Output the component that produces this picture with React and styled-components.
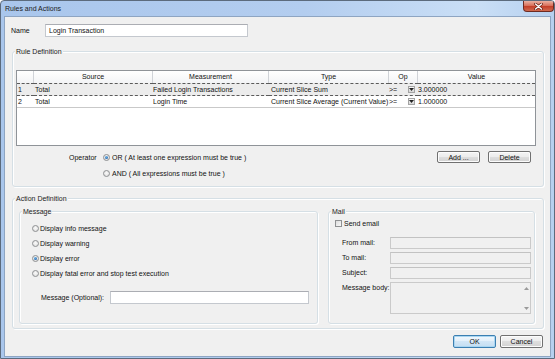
import React from "react";
import styled, { createGlobalStyle } from "styled-components";

const Global = createGlobalStyle`
  html, body { margin: 0; padding: 0; background: #ffffff; }
  body {
    font-family: "Liberation Sans", Arial, sans-serif;
    font-size: 7px;
    color: #000;
  }
  * { box-sizing: border-box; }
`;

const Window = styled.div`
  width: 555px;
  height: 359px;
  border: 1px solid #5c6b7d;
  border-radius: 4px 4px 0 0;
  background: linear-gradient(90deg, #a9c6ec 0%, #b3cdef 55%, #cadff6 86%, #b6d0ef 100%);
  display: flex;
  flex-direction: column;
  overflow: hidden;
`;

const TitleBar = styled.div`
  height: 15px;
  flex: none;
  display: flex;
  align-items: flex-start;
  padding-left: 4px;
`;

const TitleText = styled.span`
  line-height: 15px;
  color: #1b1b1b;
`;

const CloseButton = styled.div`
  margin-left: auto;
  width: 31px;
  height: 11px;
  border: 1px solid #6e2a21;
  border-top: none;
  border-radius: 0 0 4px 4px;
  background: linear-gradient(#eab1a2 0%, #d9725d 45%, #c4402a 55%, #d06a4f 100%);
  display: flex;
  align-items: center;
  justify-content: center;
`;

const Client = styled.div`
  flex: 1;
  margin: 0 3px 1px;
  border: 1px solid #8ea5c2;
  background: #f0f0f0;
  display: flex;
  flex-direction: column;
  padding: 0 6px 0 7px;
`;

const NameRow = styled.div`
  display: flex;
  align-items: center;
  height: 13px;
  margin-top: 7px;
  margin-left: -1px;
`;

const FieldLabel = styled.span`
  width: ${(p) => p.$w}px;
  flex: none;
  line-height: 9px;
  color: #111;
`;

const TextBox = styled.div`
  width: ${(p) => p.$w}px;
  height: ${(p) => p.$h || 13}px;
  flex: none;
  border: 1px solid ${(p) => (p.$disabled ? "#cacaca" : "#c4c8ce")};
  border-top-color: ${(p) => (p.$disabled ? "#c2c2c2" : "#abadb3")};
  background: ${(p) => (p.$disabled ? "#f0f0f0" : "#ffffff")};
  padding-left: 3px;
  display: flex;
  align-items: center;
  color: #111;
`;

const Group = styled.div`
  position: relative;
  flex: none;
  margin-top: ${(p) => p.$mt || 0}px;
  width: ${(p) => (p.$w ? `${p.$w}px` : "auto")};
  height: ${(p) => p.$h}px;
  border: 1px solid #d5dfe5;
  border-radius: 3px;
  box-shadow: inset 1px 1px 0 #ffffff, 1px 1px 0 #ffffff;
  padding: ${(p) => p.$pad};
`;

const GroupTitle = styled.span`
  position: absolute;
  top: -5px;
  left: 2px;
  padding: 0 1px;
  line-height: 9px;
  background: #f0f0f0;
  color: #1c1c1c;
`;

const TableFrame = styled.div`
  height: 76px;
  border: 1px solid #8f9398;
  background: #ffffff;
`;

const Grid = styled.table`
  width: 518px;
  table-layout: fixed;
  border-collapse: separate;
  border-spacing: 0;
  font-size: 7px;
`;

const HeadCell = styled.th`
  height: 12px;
  padding: 0;
  font-weight: normal;
  text-align: center;
  line-height: 12px;
  border-right: ${(p) => (p.$last ? "none" : "1px solid #d0d3d8")};
  background: linear-gradient(#ffffff, #f3f4f6);
  color: #111;
`;

const Row = styled.tr`
  background: ${(p) => (p.$focused ? "#ececec" : "#ffffff")};
`;

const Cell = styled.td`
  height: 11px;
  padding: 0 0 0 ${(p) => p.$pl ?? 1}px;
  line-height: 11px;
  white-space: nowrap;
  overflow: hidden;
  color: #111;
  border-top: ${(p) => (p.$focused ? "1px dashed #5a5a5a" : "none")};
  border-bottom: ${(p) => (p.$focused ? "1px dashed #5a5a5a" : "1px solid #c9c9c9")};
`;

const OpInner = styled.div`
  display: flex;
  align-items: center;
  justify-content: space-between;
  padding-right: 3px;
`;

const DropButton = styled.span`
  width: 7px;
  height: 7px;
  border: 1px solid #a3a3a3;
  background: linear-gradient(#fafafa, #d6d6d6);
  display: flex;
  align-items: center;
  justify-content: center;
`;

const OperatorArea = styled.div`
  margin-top: 5px;
  display: flex;
  align-items: flex-start;
`;

const OperatorGrid = styled.div`
  display: grid;
  grid-template-columns: 34px auto;
  grid-auto-rows: 12px;
  row-gap: 4px;
  padding-left: 53px;
  align-items: center;
`;

const ChoiceLabel = styled.label`
  display: flex;
  align-items: center;
  gap: ${(p) => p.$gap ?? 2}px;
  height: ${(p) => p.$h || 12}px;
  color: #111;
  line-height: 9px;
`;

const RadioDot = styled.span`
  width: 7px;
  height: 7px;
  flex: none;
  border-radius: 50%;
  border: 1px solid #8e9092;
  background: radial-gradient(circle at 50% 40%, #fbfbfb, #d9d9d9);
  display: inline-flex;
  align-items: center;
  justify-content: center;
  &::after {
    content: "";
    width: 3px;
    height: 3px;
    border-radius: 50%;
    background: ${(p) => (p.$checked ? "radial-gradient(circle at 40% 35%, #6ab7ec, #174f98)" : "transparent")};
  }
`;

const CheckBox = styled.span`
  width: 7px;
  height: 7px;
  flex: none;
  border: 1px solid #8e9092;
  background: linear-gradient(135deg, #dcdcdc, #f8f8f8);
`;

const ButtonGroup = styled.div`
  margin-left: auto;
  margin-right: 5px;
  display: flex;
  gap: ${(p) => p.$gap}px;
`;

const Button = styled.div`
  width: 43px;
  height: ${(p) => p.$h || 12}px;
  border: 1px solid ${(p) => (p.$default ? "#3c7fb1" : "#707070")};
  border-radius: 2px;
  background: ${(p) =>
    p.$default
      ? "linear-gradient(#f1f8fd 0%, #e2effa 50%, #d2e6f6 50%, #c4def2 100%)"
      : "linear-gradient(#f4f4f4 0%, #ececec 50%, #dedede 50%, #d2d2d2 100%)"};
  box-shadow: inset 0 0 0 1px ${(p) => (p.$default ? "#a9d6f2" : "#fcfcfc")};
  display: flex;
  align-items: center;
  justify-content: center;
  color: #111;
`;

const ActionBody = styled.div`
  display: flex;
  align-items: flex-start;
  gap: 10px;
`;

const RadioList = styled.div`
  display: flex;
  flex-direction: column;
`;

const OptionalRow = styled.div`
  margin-top: 10px;
  padding-left: 9px;
  display: flex;
  align-items: center;
`;

const MailGrid = styled.div`
  margin-top: 8px;
  padding-left: 7px;
  display: grid;
  grid-template-columns: 48px 141px;
  grid-template-rows: 12px 12px 12px 32px;
  row-gap: 3px;
`;

const MailLabel = styled.span`
  line-height: 9px;
  padding-top: 1px;
  color: #111;
`;

const BodyArea = styled.div`
  border: 1px solid #cacaca;
  background: #f0f0f0;
  display: flex;
  justify-content: flex-end;
`;

const ScrollBar = styled.div`
  width: 8px;
  display: flex;
  flex-direction: column;
  justify-content: space-between;
  align-items: center;
  padding: 4px 0 3px;
`;

const FooterRow = styled.div`
  margin-top: 6px;
  display: flex;
  justify-content: flex-end;
  gap: 4px;
  padding-right: 1px;
`;

const Arrow = ({ up, color = "#9a9a9a" }) => (
  <svg width="5" height="3" viewBox="0 0 5 3">
    <path d={up ? "M0 3 L2.5 0 L5 3 Z" : "M0 0 L5 0 L2.5 3 Z"} fill={color} />
  </svg>
);

const rows = [
  { n: "1", src: "Total", m: "Failed Login Transactions", t: "Current Slice Sum", op: ">=", v: "3.000000", focused: true },
  { n: "2", src: "Total", m: "Login Time", t: "Current Slice Average (Current Value)", op: ">=", v: "1.000000" },
];

export default function App() {
  return (
    <>
      <Global />
      <Window>
        <TitleBar>
          <TitleText>Rules and Actions</TitleText>
          <CloseButton>
            <svg width="9" height="7" viewBox="0 0 9 7">
              <path d="M1.5 1 L7.5 6 M7.5 1 L1.5 6" stroke="#6b2419" strokeWidth="2.8" strokeLinecap="round" />
              <path d="M1.5 1 L7.5 6 M7.5 1 L1.5 6" stroke="#ffffff" strokeWidth="1.4" strokeLinecap="round" />
            </svg>
          </CloseButton>
        </TitleBar>
        <Client>
          <NameRow>
            <FieldLabel $w={34}>Name</FieldLabel>
            <TextBox $w={203}>Login Transaction</TextBox>
          </NameRow>

          <Group $mt={14} $h={136} $pad="18px 7px 0 3px">
            <GroupTitle>Rule Definition</GroupTitle>
            <TableFrame>
              <Grid>
                <colgroup>
                  <col style={{ width: 17 }} />
                  <col style={{ width: 119 }} />
                  <col style={{ width: 116 }} />
                  <col style={{ width: 120 }} />
                  <col style={{ width: 29 }} />
                  <col style={{ width: 117 }} />
                </colgroup>
                <thead>
                  <tr>
                    <HeadCell />
                    <HeadCell>Source</HeadCell>
                    <HeadCell>Measurement</HeadCell>
                    <HeadCell>Type</HeadCell>
                    <HeadCell>Op</HeadCell>
                    <HeadCell $last>Value</HeadCell>
                  </tr>
                </thead>
                <tbody>
                  {rows.map((r) => (
                    <Row key={r.n} $focused={r.focused}>
                      <Cell $focused={r.focused} $pl={1}>{r.n}</Cell>
                      <Cell $focused={r.focused} $pl={1}>{r.src}</Cell>
                      <Cell $focused={r.focused} $pl={0}>{r.m}</Cell>
                      <Cell $focused={r.focused} $pl={2}>{r.t}</Cell>
                      <Cell $focused={r.focused} $pl={0}>
                        <OpInner>
                          <span>{r.op}</span>
                          <DropButton>
                            <Arrow color="#222" />
                          </DropButton>
                        </OpInner>
                      </Cell>
                      <Cell $focused={r.focused} $pl={0}>{r.v}</Cell>
                    </Row>
                  ))}
                </tbody>
              </Grid>
            </TableFrame>
            <OperatorArea>
              <OperatorGrid>
                <FieldLabel $w={34}>Operator</FieldLabel>
                <ChoiceLabel>
                  <RadioDot $checked />
                  OR ( At least one expression must be true )
                </ChoiceLabel>
                <span />
                <ChoiceLabel>
                  <RadioDot />
                  AND ( All expressions must be true )
                </ChoiceLabel>
              </OperatorGrid>
              <ButtonGroup $gap={8}>
                <Button>Add ...</Button>
                <Button>Delete</Button>
              </ButtonGroup>
            </OperatorArea>
          </Group>

          <Group $mt={11} $h={131} $pad="12px 8px 0 6px">
            <GroupTitle>Action Definition</GroupTitle>
            <ActionBody>
              <Group $w={299} $h={113} $pad="9px 0 0 12px">
                <GroupTitle>Message</GroupTitle>
                <RadioList>
                  <ChoiceLabel $h={15} $gap={1}>
                    <RadioDot />
                    Display info message
                  </ChoiceLabel>
                  <ChoiceLabel $h={15} $gap={1}>
                    <RadioDot />
                    Display warning
                  </ChoiceLabel>
                  <ChoiceLabel $h={15} $gap={1}>
                    <RadioDot $checked />
                    Display error
                  </ChoiceLabel>
                  <ChoiceLabel $h={15} $gap={1}>
                    <RadioDot />
                    Display fatal error and stop test execution
                  </ChoiceLabel>
                </RadioList>
                <OptionalRow>
                  <FieldLabel $w={69}>Message (Optional):</FieldLabel>
                  <TextBox $w={199} />
                </OptionalRow>
              </Group>
              <Group $w={207} $h={113} $pad="6px 0 0 6px">
                <GroupTitle>Mail</GroupTitle>
                <ChoiceLabel $h={11} $gap={2}>
                  <CheckBox />
                  Send email
                </ChoiceLabel>
                <MailGrid>
                  <MailLabel>From mail:</MailLabel>
                  <TextBox $w={141} $h={12} $disabled />
                  <MailLabel>To mail:</MailLabel>
                  <TextBox $w={141} $h={12} $disabled />
                  <MailLabel>Subject:</MailLabel>
                  <TextBox $w={141} $h={12} $disabled />
                  <MailLabel>Message body:</MailLabel>
                  <BodyArea>
                    <ScrollBar>
                      <Arrow up />
                      <Arrow />
                    </ScrollBar>
                  </BodyArea>
                </MailGrid>
              </Group>
            </ActionBody>
          </Group>

          <FooterRow>
            <Button $default $h={13}>OK</Button>
            <Button $h={13}>Cancel</Button>
          </FooterRow>
        </Client>
      </Window>
    </>
  );
}
